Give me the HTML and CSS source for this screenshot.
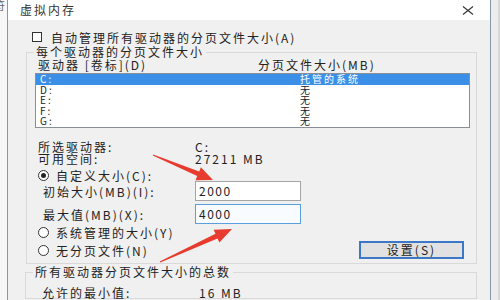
FILE: index.html
```html
<!DOCTYPE html>
<html>

<head>
    <title>虚拟内存</title>
    <meta charset="UTF-8">
    <link rel="stylesheet" href="styles.css">
</head>

<body>
    <div class="desk">
        <div class="edge-left"><span class="edge-char">符</span></div>
        <div class="dialog">
            <div class="titlebar">
                <span class="title">虚拟内存</span>
                <svg class="close" width="12" height="9" viewBox="0 0 12 9">
                    <path d="M1 0.5 L11 8.5 M11 0.5 L1 8.5" stroke="#333" stroke-width="1.1" fill="none" />
                </svg>
            </div>
            <div class="content">
                <div class="auto-row">
                    <span class="checkbox"></span>
                    <span>自动管理所有驱动器的分页文件大小(A)</span>
                </div>

                <fieldset class="group group-drives">
                    <legend>每个驱动器的分页文件大小</legend>
                    <div class="list-head">
                        <span class="col-drive">驱动器 [卷标](D)</span>
                        <span>分页文件大小(MB)</span>
                    </div>
                    <div class="listbox">
                        <div class="list-row selected"><span class="col-a">C:</span><span>托管的系统</span></div>
                        <div class="list-row"><span class="col-a">D:</span><span>无</span></div>
                        <div class="list-row"><span class="col-a">E:</span><span>无</span></div>
                        <div class="list-row"><span class="col-a">F:</span><span>无</span></div>
                        <div class="list-row"><span class="col-a">G:</span><span>无</span></div>
                    </div>

                    <div class="info-row first">
                        <span class="info-label">所选驱动器:</span>
                        <span>C:</span>
                    </div>
                    <div class="info-row">
                        <span class="info-label">可用空间:</span>
                        <span>27211 MB</span>
                    </div>

                    <div class="radio-row custom">
                        <span class="radio checked"></span>
                        <span>自定义大小(C):</span>
                    </div>
                    <div class="field-row">
                        <span class="field-label">初始大小(MB)(I):</span>
                        <span class="textbox">2000</span>
                    </div>
                    <div class="field-row second">
                        <span class="field-label">最大值(MB)(X):</span>
                        <span class="textbox focused">4000</span>
                    </div>
                    <div class="radio-row system">
                        <span class="radio"></span>
                        <span>系统管理的大小(Y)</span>
                    </div>
                    <div class="radio-row nofile">
                        <span class="radio"></span>
                        <span>无分页文件(N)</span>
                        <span class="button">设置(S)</span>
                    </div>
                </fieldset>

                <fieldset class="group group-total">
                    <legend>所有驱动器分页文件大小的总数</legend>
                    <div class="info-row total">
                        <span class="info-label">允许的最小值:</span>
                        <span>16 MB</span>
                    </div>
                </fieldset>
            </div>
        </div>
        <div class="edge-right"></div>
    </div>

    <!-- red hint arrows drawn over the dialog -->
    <svg class="arrows" width="500" height="300" viewBox="0 0 500 300">
        <polygon fill="#e63b2e"
            points="153.2,154.5 199.2,171.5 200.9,167.3 213,180 195.5,180.3 197.2,176.1 152.8,155.5" />
        <polygon fill="#e63b2e"
            points="159.7,261.5 215.5,233.8 213.6,229.7 232,229 219.4,242.5 217.5,238.4 160.3,262.5" />
    </svg>
</body>

</html>
```

FILE: styles.css
```css
* {
    margin: 0;
    padding: 0;
    box-sizing: border-box;
}

body {
    width: 500px;
    height: 300px;
    overflow: hidden;
    position: relative;
    font-family: "Noto Sans CJK SC", "Liberation Sans", sans-serif;
    font-size: 12px;
    letter-spacing: 2px;
    color: #222;
    background-color: #f6f6f6;
}

.desk {
    display: flex;
    height: 300px;
    overflow: hidden;
}

.edge-left {
    width: 7px;
    overflow: hidden;
    background-color: #f7f7f7;
}

.edge-char {
    display: block;
    margin-left: -6px;
    font-size: 11px;
    line-height: 11px;
    color: #666;
}

.dialog {
    width: 484px;
    border-left: 1px solid #8497ab;
    border-right: 1px solid #8497ab;
    display: flex;
    flex-direction: column;
}

.edge-right {
    flex: 1;
    background-color: #ececec;
    border-right: 2px solid #d8d8d8;
}

.titlebar {
    height: 20px;
    background-color: #fff;
    display: flex;
    align-items: center;
    justify-content: space-between;
    padding: 0 16px 0 12px;
}

.title {
    color: #333;
    line-height: 20px;
}

.close {
    display: block;
    margin-top: 1px;
}

.content {
    flex: 1;
    background-color: #f0f0f0;
}

.auto-row {
    display: flex;
    align-items: center;
    height: 12px;
    margin-top: 11px;
    padding-left: 24px;
    gap: 9px;
}

.checkbox {
    width: 10px;
    height: 10px;
    border: 1px solid #333;
    background-color: #fff;
}

.group {
    border: 1px solid #d9d9d9;
    min-width: 0;
    margin-left: 18px;
    width: 451px;
}

.group legend {
    margin-left: 7px;
    padding: 0 2px;
    line-height: 14px;
}

.group-drives {
    margin-top: 2px;
    padding-bottom: 4px;
}

.list-head {
    display: flex;
    height: 12px;
    line-height: 12px;
    padding-left: 11px;
}

.col-drive {
    width: 220px;
}

.listbox {
    margin: 2px 0 0 8px;
    width: 435px;
    height: 55px;
    border: 1px solid #8a8f96;
    background-color: #fff;
}

.list-row {
    display: flex;
    height: 10.6px;
    line-height: 10.6px;
    font-size: 10px;
    padding-left: 4px;
}

.list-row.selected {
    background-color: #3c8fe6;
    color: #fff;
}

.col-a {
    width: 260px;
}

.info-row {
    display: flex;
    height: 12px;
    line-height: 12px;
    padding-left: 11px;
}

.info-row.first {
    margin-top: 13px;
}

.info-label {
    width: 157px;
}

.radio-row {
    display: flex;
    align-items: center;
    padding-left: 11px;
    gap: 7px;
    height: 12px;
}

.radio-row.custom {
    margin-top: 4px;
}

.radio-row.system {
    margin-top: 2px;
}

.radio-row.nofile {
    margin-top: 3px;
    height: 18px;
}

.radio {
    width: 11px;
    height: 11px;
    border: 1px solid #333;
    border-radius: 50%;
    background-color: #fff;
    display: flex;
    align-items: center;
    justify-content: center;
}

.radio.checked::after {
    content: "";
    width: 5px;
    height: 5px;
    border-radius: 50%;
    background-color: #222;
}

.field-row {
    display: flex;
    align-items: center;
    height: 20px;
    padding-left: 16px;
}

.field-row.second {
    margin-top: 3px;
}

.field-label {
    width: 152px;
}

.textbox {
    width: 106px;
    height: 20px;
    line-height: 18px;
    border: 1px solid #a5a5a5;
    background-color: #fff;
    padding-left: 3px;
    letter-spacing: 1.5px;
}

.textbox.focused {
    border-color: #5b9fe0;
    background-color: #f8fbff;
}

.button {
    margin-left: auto;
    margin-right: 12px;
    width: 105px;
    height: 18px;
    line-height: 14px;
    text-align: center;
    border: 2px solid #3b78c8;
    background-color: #e1e1e1;
}

.group-total {
    margin-top: 1px;
    margin-left: 17px;
    width: 452px;
    height: 34px;
}

.info-row.total {
    margin-top: 8px;
    padding-left: 16px;
}

.arrows {
    position: absolute;
    left: 0;
    top: 0;
    pointer-events: none;
}
```
